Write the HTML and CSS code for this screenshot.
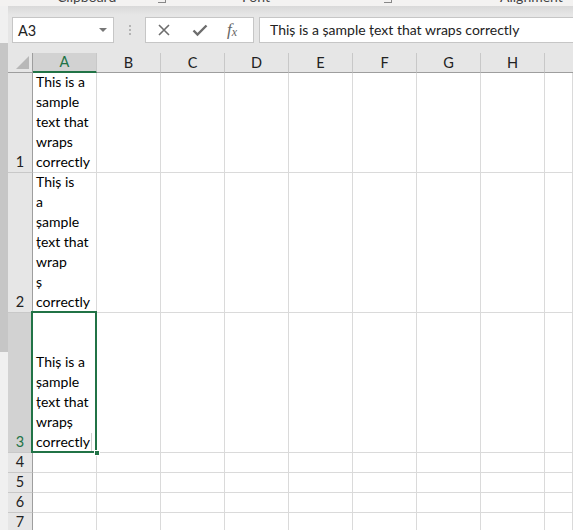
FILE: index.html
```html
<!DOCTYPE html>
<html>
<head>
<meta charset="utf-8">
<link rel="stylesheet" href="styles.css">
</head>
<body>
<div class="ribbon">
  <span class="grp g-clip">Clipboard</span>
  <span class="launch l1"></span>
  <span class="grp g-font">Font</span>
  <span class="launch l2"></span>
  <span class="grp g-align">Alignment</span>
</div>
<div class="main">
  <div class="leftstrip"><div class="thumb"></div></div>
  <div class="work">
    <div class="fbar">
      <div class="namebox"><span>A3</span><span class="caret"></span></div>
      <div class="dots"><i></i><i></i><i></i></div>
      <div class="fxbox">
        <svg class="ic" width="14" height="14" viewBox="0 0 14 14"><path d="M2 2L12 12M12 2L2 12" stroke="#6d6d6d" stroke-width="1.6" fill="none"/></svg>
        <svg class="ic" width="16" height="14" viewBox="0 0 16 14"><path d="M1.5 7.5L5.5 11.5L14.5 2.5" stroke="#6d6d6d" stroke-width="2.4" fill="none"/></svg>
        <span class="fx">f<sub>x</sub></span>
      </div>
      <div class="finput">Thiș is a șample țext that wraps correctly</div>
    </div>
    <div class="grid">
      <div class="corner"><span class="tri"></span></div>
      <div class="ch sel">A</div>
      <div class="ch">B</div>
      <div class="ch">C</div>
      <div class="ch">D</div>
      <div class="ch">E</div>
      <div class="ch">F</div>
      <div class="ch">G</div>
      <div class="ch">H</div>
      <div class="ch last"></div>

      <div class="rh">1</div>
      <div class="c txt">This is a<br>sample<br>text that<br>wraps<br>correctly</div>
      <div class="c"></div><div class="c"></div><div class="c"></div><div class="c"></div><div class="c"></div><div class="c"></div><div class="c"></div><div class="c"></div>

      <div class="rh">2</div>
      <div class="c txt">Thiș is<br>a<br>șample<br>țext that<br>wrap<br>ș<br>correctly</div>
      <div class="c"></div><div class="c"></div><div class="c"></div><div class="c"></div><div class="c"></div><div class="c"></div><div class="c"></div><div class="c"></div>

      <div class="rh sel">3</div>
      <div class="c txt active">Thiș is a<br>șample<br>țext that<br>wrapș<br>correctly<span class="cursor"></span><span class="selbox"></span><span class="handle"></span></div>
      <div class="c"></div><div class="c"></div><div class="c"></div><div class="c"></div><div class="c"></div><div class="c"></div><div class="c"></div><div class="c"></div>

      <div class="rh">4</div>
      <div class="c"></div><div class="c"></div><div class="c"></div><div class="c"></div><div class="c"></div><div class="c"></div><div class="c"></div><div class="c"></div><div class="c"></div>
      <div class="rh">5</div>
      <div class="c"></div><div class="c"></div><div class="c"></div><div class="c"></div><div class="c"></div><div class="c"></div><div class="c"></div><div class="c"></div><div class="c"></div>
      <div class="rh">6</div>
      <div class="c"></div><div class="c"></div><div class="c"></div><div class="c"></div><div class="c"></div><div class="c"></div><div class="c"></div><div class="c"></div><div class="c"></div>
      <div class="rh">7</div>
      <div class="c"></div><div class="c"></div><div class="c"></div><div class="c"></div><div class="c"></div><div class="c"></div><div class="c"></div><div class="c"></div><div class="c"></div>
    </div>
  </div>
</div>
</body>
</html>
```
FILE: styles.css
```css
* { box-sizing: border-box; }
html, body { margin: 0; padding: 0; }
body {
  width: 573px;
  height: 530px;
  overflow: hidden;
  background: #e6e6e6;
  font-family: Lato, "Open Sans", sans-serif;
  color: #000;
}
.ribbon {
  height: 6px;
  background: #f3f2f1;
  overflow: hidden;
  position: relative;
  font-size: 14px;
  color: #444;
}
.grp { position: absolute; top: -12px; }
.g-clip { left: 57px; }
.g-font { left: 242px; }
.g-align { left: 500px; }
.launch {
  position: absolute; top: -5px; width: 8px; height: 8px;
  border: 1px solid #888; border-top: none; border-left: none;
}
.l1 { left: 158px; }
.l2 { left: 384px; }

.main { display: flex; height: 524px; }
.leftstrip {
  width: 8px;
  flex: none;
  background: #f0f0f0;
  padding-top: 37px;
}
.thumb { width: 8px; height: 309px; background: #c6c6c6; }
.work {
  flex: 1;
  background: linear-gradient(#d9d9d9, #e6e6e6 9px);
  display: flex; flex-direction: column;
}
.fbar {
  height: 47px;
  flex: none;
  display: flex;
  align-items: flex-start;
  padding: 11px 0 0 4px;
}
.namebox {
  width: 102px; height: 26px;
  background: #fff; border: 1px solid #c6c6c6;
  display: flex; align-items: center; justify-content: space-between;
  padding: 0 6px 0 5px;
  font-size: 14.5px; color: #222;
}
.caret {
  width: 0; height: 0;
  border-left: 4px solid transparent; border-right: 4px solid transparent;
  border-top: 4px solid #777;
}
.dots {
  width: 31px; height: 26px;
  display: flex; flex-direction: column; align-items: center; justify-content: center; gap: 2px;
}
.dots i { width: 2px; height: 2px; background: #b4b4b4; display: block; }
.fxbox {
  width: 109px; height: 26px;
  background: #fff; border: 1px solid #c6c6c6;
  display: flex; align-items: center;
  padding-left: 11px; gap: 21px;
}
.ic { display: block; }
.fx {
  font-family: "Liberation Serif", serif; font-style: italic;
  font-size: 17px; color: #666; margin-left: -2px;
}
.fx sub { font-size: 12px; vertical-align: -1px; }
.finput {
  margin-left: 5px;
  flex: 1; height: 26px;
  background: #fff; border: 1px solid #c6c6c6; border-right: none;
  padding-left: 10px;
  font-size: 14px; line-height: 24px; color: #222;
  white-space: nowrap; overflow: hidden;
}

.grid {
  display: grid;
  grid-template-columns: 25px repeat(8, 64px) 1fr;
  grid-template-rows: 20px 100px 140px 140px 20px 20px 20px 20px;
  background: #fff;
  font-size: 14px;
}
.corner {
  background: #e6e6e6;
  border-right: 1px solid #9e9e9e;
  border-bottom: 1px solid #9e9e9e;
  position: relative;
}
.tri {
  position: absolute; right: 3px; bottom: 3px;
  width: 0; height: 0;
  border-left: 13px solid transparent;
  border-bottom: 13px solid #b8b8b8;
}
.ch {
  background: #e6e6e6;
  border-bottom: 1px solid #9e9e9e;
  border-right: 1px solid #c8c8c8;
  text-align: center;
  line-height: 19px;
  font-size: 14.5px;
  color: #222;
}
.ch.sel {
  background: #d2d2d2;
  color: #217346;
  border-bottom: 2px solid #217346;
  line-height: 18px;
}
.ch.last { border-right: none; }
.rh {
  background: #e6e6e6;
  border-right: 1px solid #9e9e9e;
  border-bottom: 1px solid #c8c8c8;
  display: flex; align-items: flex-end; justify-content: center;
  line-height: 20px;
  font-size: 14.5px;
  color: #222;
}
.rh.sel { background: #d2d2d2; color: #217346; }
.c {
  border-right: 1px solid #dadada;
  border-bottom: 1px solid #dadada;
}
.txt {
  display: flex; flex-direction: column; justify-content: flex-end;
  line-height: 20px;
  padding-left: 3px;
  white-space: nowrap;
  overflow: visible;
}
.active { position: relative; }
.cursor {
  position: absolute; left: 58px; bottom: 1px;
  width: 1px; height: 18px; background: #d0d0d0;
}
.selbox {
  position: absolute; left: -2px; top: -2px; right: -1px; bottom: -1px;
  border: 2px solid #217346;
}
.handle {
  position: absolute; right: -4px; bottom: -4px;
  width: 6px; height: 6px; background: #217346;
  border: 1px solid #fff;
}
```
